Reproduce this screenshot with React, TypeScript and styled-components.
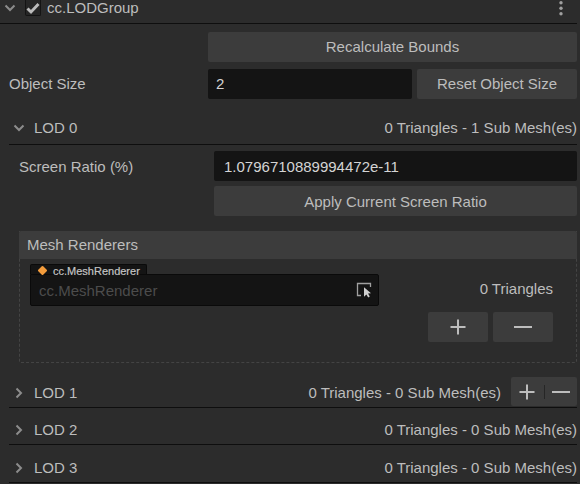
import React from "react";
import styled, { createGlobalStyle } from "styled-components";

const Global = createGlobalStyle`
  html, body { margin: 0; padding: 0; background: #2c2c2c; }
  body { width: 580px; height: 484px; overflow: hidden; font-family: "Liberation Sans", Arial, sans-serif; font-size: 15px; color: #bdbdbd; }
`;

const Panel = styled.div`
  width: 580px;
  height: 484px;
  display: flex;
  flex-direction: column;
  padding-right: 3px;
  box-sizing: border-box;
  overflow: hidden;
`;

const ComponentHeader = styled.div`
  height: 24px;
  flex: none;
  box-sizing: border-box;
  border-bottom: 1px solid #0e0e0e;
  display: flex;
  align-items: flex-start;
  padding-left: 4px;
`;

const Caret = styled.svg`
  width: 12px;
  height: 12px;
  flex: none;
  fill: none;
  stroke: #8c8c8c;
  stroke-width: 2;
`;

const HeaderCaret = styled.span`
  width: 12px;
  height: 16px;
  display: flex;
  align-items: center;
  margin-right: 9px;
`;

const Check = styled.span`
  width: 16px;
  height: 16px;
  margin-right: 6px;
  box-sizing: border-box;
  border: 1px solid #141414;
  border-top: none;
  border-radius: 0 0 2px 2px;
  background: #262626;
  display: flex;
  align-items: center;
  justify-content: center;
`;

const CheckMark = styled.svg`
  width: 14px;
  height: 14px;
  flex: none;
  fill: none;
  stroke: #bcbcbc;
  stroke-width: 2.9;
`;

const ComponentTitle = styled.span`
  flex: 1;
  line-height: 15px;
  color: #bdbdbd;
`;

const Dots = styled.svg`
  width: 4px;
  height: 16px;
  margin-right: 14px;
  flex: none;
  fill: #a0a0a0;
`;

const Body = styled.div`
  display: flex;
  flex-direction: column;
`;

const FormRow = styled.div<{ $top: number; $left: number }>`
  display: flex;
  align-items: center;
  gap: 5px;
  margin-top: ${(p) => p.$top}px;
  padding-left: ${(p) => p.$left}px;
  height: 30px;
  flex: none;
`;

const RowLabel = styled.span<{ $width: number; $lift?: boolean }>`
  width: ${(p) => p.$width}px;
  flex: none;
  padding-bottom: ${(p) => (p.$lift ? 1 : 0)}px;
  color: #bdbdbd;
`;

const ActionButton = styled.div<{ $lift?: boolean }>`
  height: 30px;
  box-sizing: border-box;
  padding-bottom: ${(p) => (p.$lift ? 1 : 0)}px;
  background: #3c3c3c;
  border-radius: 2px;
  color: #bdbdbd;
  display: flex;
  align-items: center;
  justify-content: center;
  flex: 1;
`;

const TextInput = styled.div<{ $width?: number; $lift?: boolean; $inset: number }>`
  height: 30px;
  background: #141414;
  border-radius: 2px;
  color: #d4d4d4;
  display: flex;
  align-items: center;
  padding: 0 0 ${(p) => (p.$lift ? 1 : 0)}px ${(p) => p.$inset}px;
  box-sizing: border-box;
  flex: ${(p) => (p.$width ? "none" : "1")};
  width: ${(p) => (p.$width ? `${p.$width}px` : "auto")};
`;

const LodHeader = styled.div<{ $height: number; $pad: number }>`
  height: ${(p) => p.$height}px;
  margin-left: 9px;
  padding-bottom: ${(p) => p.$pad}px;
  flex: none;
  box-sizing: border-box;
  border-bottom: 1px solid #0e0e0e;
  display: flex;
  align-items: flex-end;
  line-height: 21px;
`;

const LodCaret = styled.span`
  width: 25px;
  height: 21px;
  flex: none;
  display: flex;
  align-items: center;
  padding-left: 4px;
  box-sizing: border-box;
`;

const LodName = styled.span`
  flex: 1;
  color: #bdbdbd;
`;

const LodInfo = styled.span`
  color: #bdbdbd;
`;

const LodButtons = styled.div`
  width: 66px;
  height: 29px;
  margin: 0 0 -3px 10px;
  padding-left: 8px;
  box-sizing: border-box;
  background: #3c3c3c;
  border-radius: 2px;
  display: flex;
  align-items: center;
  flex: none;
`;

const LodDivider = styled.span`
  width: 1px;
  height: 14px;
  margin: 0 7px 0 9px;
  background: #262626;
`;

const LodContent = styled.div`
  display: flex;
  flex-direction: column;
  margin-left: 19px;
`;

const ContentRow = styled.div<{ $top: number }>`
  display: flex;
  align-items: center;
  height: 30px;
  flex: none;
  margin-top: ${(p) => p.$top}px;
`;

const ListBox = styled.div`
  margin-top: 15px;
  height: 132px;
  box-sizing: border-box;
  border: 1px dashed #444;
  border-top: none;
  display: flex;
  flex-direction: column;
  border-radius: 0 0 2px 2px;
`;

const ListTitle = styled.div`
  height: 28px;
  margin: 0 -1px;
  flex: none;
  background: #3c3c3c;
  border-radius: 2px 2px 0 0;
  display: flex;
  align-items: center;
  box-sizing: border-box;
  padding: 0 0 1px 8px;
  color: #bdbdbd;
`;

const ListRow = styled.div`
  display: flex;
  align-items: flex-start;
  padding: 5px 23px 0 10px;
  height: 53px;
  flex: none;
  box-sizing: border-box;
`;

const AssetField = styled.div`
  width: 349px;
  flex: none;
  display: flex;
  flex-direction: column;
  align-items: flex-start;
`;

const AssetTab = styled.div`
  position: relative;
  z-index: 1;
  height: 10px;
  box-sizing: border-box;
  padding: 0 6px 0 8px;
  background: #141414;
  border: 1px solid #0a0a0a;
  border-bottom: none;
  border-radius: 2px 2px 0 0;
  display: flex;
  align-items: flex-start;
  gap: 7px;
  font-size: 11px;
  line-height: 12px;
  -webkit-text-stroke: 0.2px #c4c4c4;
  color: #c4c4c4;
`;

const Diamond = styled.span`
  width: 7px;
  height: 7px;
  margin-top: 2px;
  background: #f39c3c;
  transform: rotate(45deg);
  border-radius: 1px;
  flex: none;
`;

const AssetBody = styled.div`
  width: 100%;
  height: 32px;
  box-sizing: border-box;
  background: #141414;
  border: 1px solid #0a0a0a;
  border-radius: 0 2px 2px 2px;
  display: flex;
  align-items: center;
  justify-content: space-between;
  padding: 0 6px 0 8px;
  color: #4c4c4c;
`;

const PickIcon = styled.svg`
  width: 16px;
  height: 16px;
  flex: none;
  fill: none;
`;

const TriCount = styled.span`
  flex: 1;
  text-align: right;
  margin-top: 16px;
  color: #bdbdbd;
`;

const ListActions = styled.div`
  display: flex;
  justify-content: flex-end;
  gap: 5px;
  padding-right: 23px;
`;

const SmallButton = styled.div`
  width: 60px;
  height: 30px;
  background: #3c3c3c;
  border-radius: 2px;
  display: flex;
  align-items: center;
  justify-content: center;
`;

const SignIcon = styled.svg<{ $wide?: boolean }>`
  width: ${(p) => (p.$wide ? 18 : 16)}px;
  height: 16px;
  flex: none;
  stroke: #bdbdbd;
  stroke-width: 2;
  fill: none;
`;

const Down = () => (
  <Caret viewBox="0 0 12 12"><path d="M1.5 3.5 6 8l4.5-4.5" /></Caret>
);
const Right = () => (
  <Caret viewBox="0 0 12 12"><path d="M3.5 1.5 8 6l-4.5 4.5" /></Caret>
);
const Plus = () => (
  <SignIcon viewBox="0 0 16 16"><path d="M8 .5v15M.5 8h15" /></SignIcon>
);
const Minus = () => (
  <SignIcon $wide viewBox="0 0 18 16"><path d="M0 8h18" /></SignIcon>
);

const Lod = ({ name, info, buttons, height }: { name: string; info: string; buttons?: boolean; height: number }) => (
  <LodHeader $height={height} $pad={4}>
    <LodCaret><Right /></LodCaret>
    <LodName>{name}</LodName>
    <LodInfo>{info}</LodInfo>
    {buttons && (
      <LodButtons><Plus /><LodDivider /><Minus /></LodButtons>
    )}
  </LodHeader>
);

export default function App() {
  return (
    <>
      <Global />
      <Panel>
        <ComponentHeader>
          <HeaderCaret><Down /></HeaderCaret>
          <Check>
            <CheckMark viewBox="0 0 14 14"><path d="M1.5 7.5 5 11l7.5-8" /></CheckMark>
          </Check>
          <ComponentTitle>cc.LODGroup</ComponentTitle>
          <Dots viewBox="0 0 4 16"><circle cx="2" cy="2.8" r="1.7" /><circle cx="2" cy="8.3" r="1.7" /><circle cx="2" cy="13.7" r="1.7" /></Dots>
        </ComponentHeader>
        <Body>
          <FormRow $top={8} $left={208}>
            <ActionButton $lift>Recalculate Bounds</ActionButton>
          </FormRow>
          <FormRow $top={7} $left={9}>
            <RowLabel $width={194} $lift>Object Size</RowLabel>
            <TextInput $width={204} $lift $inset={8}>2</TextInput>
            <ActionButton $lift>Reset Object Size</ActionButton>
          </FormRow>
          <LodHeader $height={46} $pad={6}>
            <LodCaret><Down /></LodCaret>
            <LodName>LOD 0</LodName>
            <LodInfo>0 Triangles - 1 Sub Mesh(es)</LodInfo>
          </LodHeader>
          <LodContent>
            <ContentRow $top={6}>
              <RowLabel $width={195}>Screen Ratio (%)</RowLabel>
              <TextInput $inset={10}>1.0796710889994472e-11</TextInput>
            </ContentRow>
            <FormRow $top={5} $left={195}>
              <ActionButton>Apply Current Screen Ratio</ActionButton>
            </FormRow>
            <ListBox>
              <ListTitle>Mesh Renderers</ListTitle>
              <ListRow>
                <AssetField>
                  <AssetTab><Diamond />cc.MeshRenderer</AssetTab>
                  <AssetBody>
                    cc.MeshRenderer
                    <PickIcon viewBox="0 0 16 16">
                      <path d="M5 13.5H1.5V1.5h13V5" stroke="#a0a0a0" strokeWidth="1.3" />
                      <path d="M8 5.2v9.6l2.4-2.2 1.8 3 1.6-1-1.8-3 3-.4z" fill="#cfcfcf" />
                    </PickIcon>
                  </AssetBody>
                </AssetField>
                <TriCount>0 Triangles</TriCount>
              </ListRow>
              <ListActions>
                <SmallButton><Plus /></SmallButton>
                <SmallButton><Minus /></SmallButton>
              </ListActions>
            </ListBox>
          </LodContent>
          <Lod name="LOD 1" info="0 Triangles - 0 Sub Mesh(es)" buttons height={45} />
          <Lod name="LOD 2" info="0 Triangles - 0 Sub Mesh(es)" height={37} />
          <Lod name="LOD 3" info="0 Triangles - 0 Sub Mesh(es)" height={38} />
        </Body>
      </Panel>
    </>
  );
}
